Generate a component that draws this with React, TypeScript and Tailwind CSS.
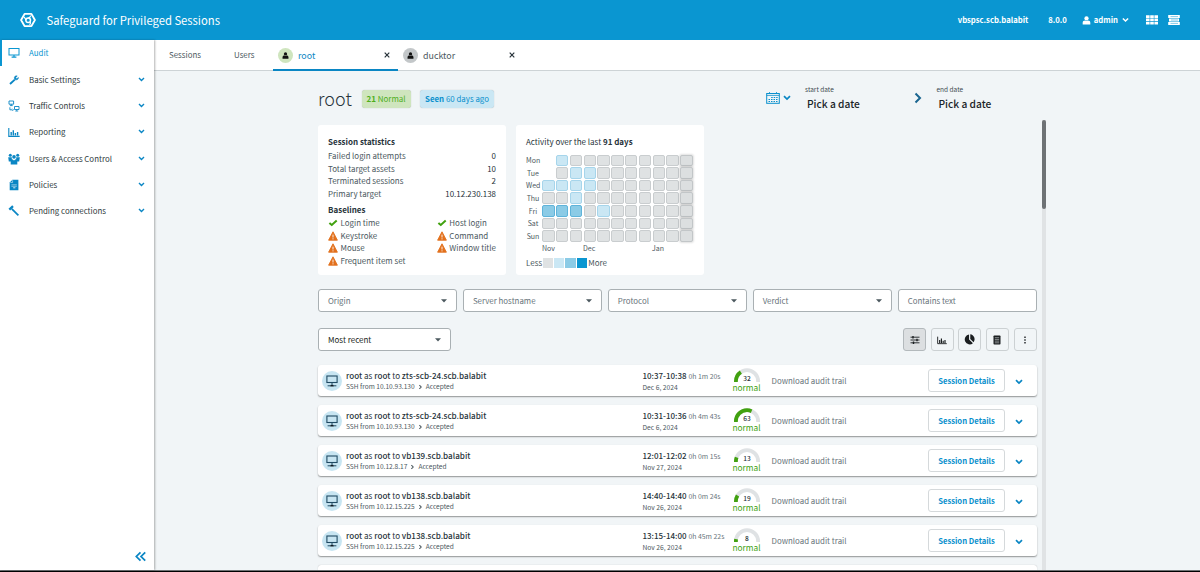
import type { ReactNode } from "react";

type IconProps = { className?: string };

function Chevron({ className = "" }: IconProps) {
  return (
    <svg viewBox="0 0 8 6" className={className} fill="none" stroke="currentColor" strokeWidth="1.7">
      <path d="M1 1.200 4 4.100 7 1.200" />
    </svg>
  );
}

function Monitor({ className = "" }: IconProps) {
  return (
    <svg viewBox="0 0 12 12" className={className} fill="none" stroke="currentColor">
      <rect x=".9" y="1" width="10.200" height="6.500" strokeWidth="1.100" />
      <path d="M6 7.500v3M1.600 10.800h3M7.400 10.800h3" strokeWidth="1" />
      <path d="M4.400 10.700h3.200" strokeWidth="1.600" stroke="#101c24" />
    </svg>
  );
}

function AuditIcon() {
  return (
    <svg viewBox="0 0 12 12" className="size-3" fill="none" stroke="currentColor">
      <rect x="1" y="1.500" width="10" height="6.500" strokeWidth="1" />
      <path d="M6 8v2M3.600 10.200h4.800" strokeWidth="1.200" />
    </svg>
  );
}

function WrenchIcon() {
  return (
    <svg viewBox="0 0 12 12" className="size-3" fill="none" stroke="currentColor">
      <path d="M2 10 6.800 5.600" strokeWidth="1.900" />
      <path d="M9.200 1.900C7 1.400 5.700 3.200 6.600 5.200c1.800 1.500 3.900.3 3.900-1.700L8.700 4.700 7.700 3.700Z" fill="currentColor" strokeWidth=".5" />
    </svg>
  );
}

function TrafficIcon() {
  return (
    <svg viewBox="0 0 12 12" className="size-3" fill="none" stroke="currentColor" strokeWidth=".9">
      <path d="M1 1h4.600v3.200H1ZM3.300 4.200v1.300M1.900 5.600h2.800M6.500 6.500H11v3H6.500ZM8.700 9.500v1.300M7.300 11h2.900M1.900 7.300v2.500h2.300" />
      <path d="m4.400 8.700 1 1.100-1 1.100" />
    </svg>
  );
}

function BarsIcon({ className = "size-3" }: IconProps) {
  return (
    <svg viewBox="0 0 12 12" className={className} fill="none" stroke="currentColor">
      <path d="M.8 2v8.400h10.900" strokeWidth="1.100" />
      <path d="M3.200 6v3.600M5.300 4.200v5.400M7.400 6.900v2.700M9.600 6v3.600" strokeWidth="1.400" />
    </svg>
  );
}

function GroupIcon() {
  return (
    <svg viewBox="0 0 12 12" className="size-3" fill="currentColor">
      <circle cx="2.300" cy="2.300" r="1.500" />
      <circle cx="9.700" cy="2.300" r="1.500" />
      <circle cx="6" cy="3.900" r="1.800" />
      <path d="M.2 4.300h3.600v2.200L2.500 8.500H.8ZM8.200 4.300h3.600l-.6 4.200H9.500L8.200 6.500ZM2.700 6.200h1.600L6 7.600l1.700-1.400h1.600v5.200H2.700Z" />
    </svg>
  );
}

function PolicyIcon() {
  return (
    <svg viewBox="0 0 12 12" className="size-3">
      <path d="M4.400.7h6v10.600H1.700V3.400Z" fill="currentColor" />
      <path d="M4.600 1.200v2.300H2.300M3.400 5.800h5.400M3.400 7.300h5.400" fill="none" stroke="#fff" strokeWidth=".5" />
      <path d="M5.200 8.800h2.200" stroke="#fff" strokeWidth=".8" />
    </svg>
  );
}

function GavelIcon() {
  return (
    <svg viewBox="0 0 12 12" className="size-3" fill="none" stroke="currentColor">
      <path d="M1.300 4.600 5 1.200" strokeWidth="2.300" />
      <path d="m3.800 3.800 6.600 6.600" strokeWidth="1.700" />
    </svg>
  );
}

function Person({ className = "" }: IconProps) {
  return (
    <svg viewBox="0 0 8 8" className={className} fill="currentColor">
      <circle cx="4" cy="2.200" r="1.900" />
      <path d="M.6 7.600V6c0-1.300.8-1.900 2.200-1.900.8.5 1.600.5 2.400 0 1.400 0 2.200.6 2.200 1.900v1.600Z" />
    </svg>
  );
}

function Logo() {
  return (
    <svg viewBox="0 0 16 16" className="ml-[20px] h-4 w-4" fill="none" stroke="#fff">
      <path d="M4.600 1.900h6.800L14.900 8l-3.500 6.100H4.600L1.100 8Z" strokeWidth="1.900" strokeLinejoin="round" />
      <circle cx="8.200" cy="8.300" r="2.300" strokeWidth="1.500" />
      <path d="M5.900 8.300C5.600 6.500 4.900 5.600 3.900 5M8.200 6c1.400-.2 2.200-1 2.500-2.300M10.200 9.500c.6 1.300.2 2.300-.6 3.300" strokeWidth="1.200" />
    </svg>
  );
}

function Warn() {
  return (
    <svg viewBox="0 0 10 10" className="size-[10px]">
      <path d="M5 .8 9.400 9.200H.6Z" fill="#e2701c" stroke="#e2701c" strokeWidth=".9" strokeLinejoin="round" />
      <path d="M5 3.600v2.900M5 7.300v1.100" stroke="#fff" strokeWidth=".9" />
    </svg>
  );
}

function Check() {
  return (
    <svg viewBox="0 0 10 10" className="size-[10px]" fill="none" stroke="#41a10f" strokeWidth="2">
      <path d="M1.400 4.900 3.800 7 8.700 2.500" />
    </svg>
  );
}

const nav: { label: string; icon: ReactNode }[] = [
  { label: "Audit", icon: <AuditIcon /> },
  { label: "Basic Settings", icon: <WrenchIcon /> },
  { label: "Traffic Controls", icon: <TrafficIcon /> },
  { label: "Reporting", icon: <BarsIcon /> },
  { label: "Users & Access Control", icon: <GroupIcon /> },
  { label: "Policies", icon: <PolicyIcon /> },
  { label: "Pending connections", icon: <GavelIcon /> },
];

function Header() {
  return (
    <header className="flex h-10 shrink-0 items-center bg-[#0a96d1] text-white">
      <Logo />
      <h1 className="ml-[10.500px] text-[11.250px] leading-4">Safeguard for Privileged Sessions</h1>
      <div className="ml-auto flex items-center pr-[20px] text-[7.700px] leading-3 font-bold">
        <span>vbspsc.scb.balabit</span>
        <span className="ml-[20px]">8.0.0</span>
        <Person className="ml-[15px] size-[9px]" />
        <span className="ml-[3px]">admin</span>
        <Chevron className="ml-[4px] h-[6px] w-[7px]" />
        <svg viewBox="0 0 12 10" className="ml-[17px] h-[10px] w-3" fill="#fff">
          <path d="M0 .3h3.600v2.700H0ZM4.200.3h3.600v2.700H4.200ZM8.400.3h3.600v2.700H8.400ZM0 3.600h3.600v2.700H0ZM4.200 3.600h3.600v2.700H4.200ZM8.400 3.600h3.600v2.700H8.400ZM0 6.900h3.600v2.700H0ZM4.200 6.900h3.600v2.700H4.200ZM8.400 6.900h3.600v2.700H8.400Z" />
        </svg>
        <svg viewBox="0 0 12 10" className="ml-[10px] h-[10px] w-3" fill="none">
          <path d="M.2 1.500h11.600M1 5h10M.2 8.500h11.600" stroke="#fff" strokeWidth="2.900" />
          <path d="M2.500 1.600h7.500M3 5h7M2.500 8.400h7.500" stroke="#0a96d1" strokeWidth=".5" />
        </svg>
      </div>
    </header>
  );
}

function Sidebar() {
  return (
    <aside className="z-10 flex w-[154px] shrink-0 flex-col bg-white shadow-[1px_0_2px_rgba(0,0,0,0.3)]">
      {nav.map((n, i) => (
        <div
          key={n.label}
          className={
            i === 0
              ? "flex h-[26.25px] items-center border-l-2 border-[#0a96d1] pl-[6px] text-[#0a96d1]"
              : "flex h-[26.25px] items-center pt-px pl-2 text-[#0a86c4]"
          }
        >
          {n.icon}
          <span
            className={
              i === 0
                ? "ml-[9px] text-[7.900px] leading-3"
                : "ml-[9px] text-[7.900px] leading-3 text-[#2f3b40]"
            }
          >
            {n.label}
          </span>
          {i > 0 && <Chevron className="mr-[9px] mb-px ml-auto h-[5px] w-[7px]" />}
        </div>
      ))}
      <svg viewBox="0 0 10 10" className="mt-auto mr-[8px] mb-[8px] ml-auto size-[11px]" fill="none" stroke="#0a86c4" strokeWidth="1.600">
        <path d="M5 1.200 1.200 5 5 8.800M9.300 1.200 5.500 5l3.800 3.800" />
      </svg>
    </aside>
  );
}

function Close() {
  return (
    <svg viewBox="0 0 6 6" className="ml-auto size-[6px]" stroke="#27333a" strokeWidth="1.200">
      <path d="m.7.700 4.600 4.600M5.300.700.7 5.300" />
    </svg>
  );
}

function Tabs() {
  return (
    <div className="flex h-[31px] shrink-0 border-b border-[#cdd3d6] bg-white text-[7.900px] text-[#4b585e]">
      <div className="flex w-[65px] items-center pl-[15px]">Sessions</div>
      <div className="flex w-[54px] items-center pl-[15px]">Users</div>
      <div className="-mb-px flex w-[125px] items-center border-b-2 border-[#0a86c4] pt-px pr-[8px] pl-[5px]">
        <span className="flex size-[15px] items-center justify-center rounded-full bg-[#cfe5be] text-[#111]">
          <Person className="size-[7px]" />
        </span>
        <span className="mt-px ml-[5px] text-[8.900px] text-[#0a86c4]">root</span>
        <Close />
      </div>
      <div className="flex w-[125px] items-center pr-[8px] pl-[5px]">
        <span className="flex size-[15px] items-center justify-center rounded-full bg-[#c3c7c9] text-[#111]">
          <Person className="size-[7px]" />
        </span>
        <span className="mt-px ml-[5px] text-[8.900px]">ducktor</span>
        <Close />
      </div>
    </div>
  );
}

function DateField({ label }: { label: string }) {
  return (
    <div className="mb-[2px] w-[57px]">
      <div className="text-[6.500px] leading-[10px] text-[#3f4b50]">{label}</div>
      <div className="mt-[3px] ml-[2px] text-[10.200px] leading-[14px] font-medium whitespace-nowrap text-[#1a2428]">Pick a date</div>
    </div>
  );
}

function TitleRow() {
  return (
    <div className="flex h-[54px] items-center">
      <h2 className="-mt-px w-[35px] text-[18px] leading-5 font-light text-[#27333a]">root</h2>
      <span className="mt-[2px] ml-[8.500px] flex h-[18px] w-[49px] items-center justify-center rounded-[3px] bg-[#cfe5be] text-[8px] whitespace-pre text-[#4eae1b] shadow-[0_0_1px_rgba(0,0,0,0.3)]">
        <b>21</b> Normal
      </span>
      <span className="mt-[2px] ml-[9.500px] flex h-[18px] w-[74px] items-center justify-center rounded-[3px] bg-[#cae7f4] text-[7.900px] whitespace-pre text-[#0a90cd] shadow-[0_0_1px_rgba(0,0,0,0.3)]">
        <b>Seen</b> 60 days ago
      </span>
      <svg viewBox="0 0 14 12" className="ml-auto h-3 w-[14px]" fill="none" stroke="#0a90cd">
        <rect x=".7" y="1.500" width="12.600" height="9.800" strokeWidth="1" />
        <path d="M.7 3.400h12.600M3.500 0v2M10.500 0v2" strokeWidth=".8" />
        <path d="M5.200 5.500h6.500M2.500 7.500h9.200M2.500 9.500h9" strokeWidth="1.200" strokeDasharray="1.500 1" />
      </svg>
      <Chevron className="mr-[14px] ml-[3.500px] h-[6px] w-[8px] text-[#0a86c4]" />
      <DateField label="start date" />
      <svg viewBox="0 0 8 12" className="mr-[14.500px] ml-[52px] h-3 w-2" fill="none" stroke="#1a6590" strokeWidth="2">
        <path d="m1.500 1.500 4.500 4.500-4.500 4.500" />
      </svg>
      <DateField label="end date" />
      <div className="w-[43px]" />
    </div>
  );
}

const stats = [
  ["Failed login attempts", "0"],
  ["Total target assets", "10"],
  ["Terminated sessions", "2"],
  ["Primary target", "10.12.230.138"],
];
const baselines: [string, boolean][][] = [
  [["Login time", true], ["Keystroke", false], ["Mouse", false], ["Frequent item set", false]],
  [["Host login", true], ["Command", false], ["Window title", false]],
];

function StatsCard() {
  return (
    <section className="h-[150px] w-[188px] rounded-[3px] bg-white px-[10px] pt-[11px] text-[7.950px] leading-[12.500px] text-[#4b585e]">
      <h3 className="mb-[1.500px] text-[8px] font-bold text-[#27333a]">Session statistics</h3>
      {stats.map(([k, v]) => (
        <div key={k} className="flex justify-between">
          <span>{k}</span>
          <span className="text-[#27333a]">{v}</span>
        </div>
      ))}
      <h3 className="mt-[3.700px] mb-px text-[8px] font-bold text-[#27333a]">Baselines</h3>
      <div className="flex">
        {baselines.map((col, i) => (
          <div key={i} className={i === 0 ? "w-[109.500px]" : ""}>
            {col.map(([t, ok]) => (
              <div key={t} className="flex items-center gap-[2.500px] whitespace-nowrap">
                {ok ? <Check /> : <Warn />}
                <span>{t}</span>
              </div>
            ))}
          </div>
        ))}
      </div>
    </section>
  );
}

const heat: [string, string][] = [
  ["Mon", " 1000000003"],
  ["Tue", " 0110000003"],
  ["Wed", "11110000003"],
  ["Thu", "00100000003"],
  ["Fri", "22201000003"],
  ["Sat", "00000000003"],
  ["Sun", "00000000003"],
];
const cellClass: Record<string, string> = {
  " ": "h-[11.500px] w-[12.500px]",
  "0": "h-[11.500px] w-[12.500px] rounded-[2px] border border-[#c9cdcf] bg-[#dfe2e3]",
  "1": "h-[11.500px] w-[12.500px] rounded-[2px] border border-[#a6d5eb] bg-[#cae7f4]",
  "2": "h-[11.500px] w-[12.500px] rounded-[2px] border border-[#5fb4da] bg-[#8bcbe6]",
  "3": "h-[11.500px] w-[12.500px] rounded-[2px] border border-[#c2c6c8] bg-[#dcdfe0] shadow-[0_0_2px_1px_rgba(0,0,0,0.12)]",
};

function ActivityCard() {
  return (
    <section className="h-[150px] w-[188px] rounded-[3px] bg-white px-[10px] pt-[10px] text-[8px] text-[#27333a]">
      <h3 className="leading-[13px] whitespace-pre">
        Activity over the last <b>91 days</b>
      </h3>
      <div className="mt-[6.300px] text-[7px]">
        {heat.map(([d, cells]) => (
          <div key={d} className="flex h-[12.550px] items-center">
            <span className="w-[14px] text-center text-[#4b585e]">{d}</span>
            <div className="ml-[2.200px] flex gap-[1.300px]">
              {cells.split("").map((c, i) => (
                <div key={i} className={cellClass[c]} />
              ))}
            </div>
          </div>
        ))}
      </div>
      <div className="mt-[1.200px] flex pl-[16px] text-[7px] leading-[10px] text-[#4b585e]">
        <span className="w-[41px]">Nov</span>
        <span className="w-[69px]">Dec</span>
        <span>Jan</span>
      </div>
      <div className="mt-[4px] flex items-center leading-3 text-[#4b585e]">
        <span className="w-[17px]">Less</span>
        <div className="flex gap-px">
          <div className="size-[10.200px] bg-[#dfe2e3]" />
          <div className="size-[10.200px] bg-[#cae7f4]" />
          <div className="size-[10.200px] bg-[#8bcbe6]" />
          <div className="size-[10.200px] bg-[#0a96d1]" />
        </div>
        <span className="ml-[1.500px]">More</span>
      </div>
    </section>
  );
}

function Caret() {
  return (
    <svg viewBox="0 0 6 4" className="ml-auto h-[4px] w-[6px]" fill="#4b585e">
      <path d="M0 .3h6L3 3.500Z" />
    </svg>
  );
}

function Filters() {
  return (
    <div className="mt-[14px] flex gap-[6px] text-[7.900px] text-[#67737a]">
      {["Origin", "Server hostname", "Protocol", "Verdict", "Contains text"].map((t, i) => (
        <div key={t} className="flex h-[23px] flex-1 items-center rounded-[3px] border border-[#a9b0b3] bg-white pt-px pr-[9px] pl-[9px]">
          {t}
          {i < 4 && <Caret />}
        </div>
      ))}
    </div>
  );
}

function ToolButton({ active, children }: { active?: boolean; children: ReactNode }) {
  return (
    <button
      className={
        active
          ? "flex h-[23px] w-[23px] items-center justify-center rounded-[3px] border border-[#b3b9bc] bg-[#dcdfe1]"
          : "flex h-[23px] w-[23px] items-center justify-center rounded-[3px] border border-[#ccd1d3]"
      }
    >
      {children}
    </button>
  );
}

function Toolbar() {
  return (
    <div className="mt-[16px] flex items-center text-[#1b1f21]">
      <div className="mr-auto flex h-[23px] w-[133px] items-center rounded-[3px] border border-[#a9b0b3] bg-white px-[9px] pt-px text-[8px]">
        Most recent
        <Caret />
      </div>
      <div className="flex gap-[4.600px]">
        <ToolButton active>
          <svg viewBox="0 0 10 8" className="h-2 w-[10px]" stroke="currentColor" fill="none">
            <path d="M.5 1.200h9M.5 4h9M.5 6.800h9" strokeWidth=".9" />
            <path d="M3 0v2.400M7 2.800v2.400M3.500 5.600V8" strokeWidth="1.400" />
          </svg>
        </ToolButton>
        <ToolButton>
          <BarsIcon className="size-[10px]" />
        </ToolButton>
        <ToolButton>
          <svg viewBox="0 0 10 10" className="size-[11px]" fill="currentColor">
            <path d="M4.600.500a4.500 4.500 0 1 0 3.500 7.900L4.600 5ZM5.700.200a4.600 4.600 0 0 1 3 7.300L5.700 4.500Z" />
          </svg>
        </ToolButton>
        <ToolButton>
          <svg viewBox="0 0 8 10" className="h-[10px] w-2">
            <rect x=".5" y=".4" width="7" height="9.200" rx=".8" fill="currentColor" />
            <path d="M1.800 2.700h4.400M1.800 4.400h4.400M1.800 6.100h4.400M1.800 7.800h4.400" stroke="#b8bdbf" strokeWidth=".7" />
          </svg>
        </ToolButton>
        <ToolButton>
          <svg viewBox="0 0 2 8" className="h-2 w-[2px]" fill="currentColor">
            <path d="M.3.500h1.400v1.400H.3ZM.3 3.300h1.400v1.400H.3ZM.3 6.100h1.400v1.400H.3Z" />
          </svg>
        </ToolButton>
      </div>
    </div>
  );
}

function Gauge({ value }: { value: number }) {
  return (
    <div className="mb-px -ml-[0.500px] flex w-[28px] flex-col items-center">
      <svg viewBox="0 0 28 15" className="h-[15px] w-[28px]" fill="none" strokeWidth="3.800">
        <path d="M2.900 14V13.300A11.100 11.100 0 0 1 25.100 13.300V14" stroke="#dfe2e4" pathLength="100" />
        <path
          d="M2.900 14V13.300A11.100 11.100 0 0 1 25.100 13.300V14"
          stroke="#41a10f"
          pathLength="100"
          strokeDasharray={`${value} 200`}
        />
        <text x="14" y="13.400" textAnchor="middle" fontSize="6.600" fontWeight="500" fill="#27333a" stroke="none">
          {value}
        </text>
      </svg>
      <span className="text-[8.300px] leading-[9px] text-[#41a10f]">normal</span>
    </div>
  );
}

const sessions = [
  { host: "zts-scb-24.scb.balabit", ip: "10.10.93.130", time: "10:37-10:38", dur: "0h 1m 20s", date: "Dec 6, 2024", score: 32 },
  { host: "zts-scb-24.scb.balabit", ip: "10.10.93.130", time: "10:31-10:36", dur: "0h 4m 43s", date: "Dec 6, 2024", score: 63 },
  { host: "vb139.scb.balabit", ip: "10.12.8.17", time: "12:01-12:02", dur: "0h 0m 15s", date: "Nov 27, 2024", score: 13 },
  { host: "vb138.scb.balabit", ip: "10.12.15.225", time: "14:40-14:40", dur: "0h 0m 24s", date: "Nov 26, 2024", score: 19 },
  { host: "vb138.scb.balabit", ip: "10.12.15.225", time: "13:15-14:00", dur: "0h 45m 22s", date: "Nov 26, 2024", score: 8 },
];

function SessionRow({ s }: { s: (typeof sessions)[number] }) {
  return (
    <div className="flex h-[31px] shrink-0 items-center rounded-[3px] bg-white text-[7.900px] text-[#27333a] shadow-[0_1px_1.500px_rgba(0,0,0,0.4)]">
      <span className="ml-[4px] flex size-5 items-center justify-center rounded-full bg-[#c7e5f2] text-[#1f4a63]">
        <Monitor className="size-3" />
      </span>
      <div className="mt-px ml-[4px] w-[296.500px]">
        <div className="text-[8.100px] leading-[11px] whitespace-pre">
          <b className="font-medium">root</b> as <b className="font-medium">root</b> to <b className="font-medium">{s.host}</b>
        </div>
        <div className="flex items-center text-[6.600px] leading-[11px] text-[#4b585e]">
          SSH from {s.ip}
          <Chevron className="mx-[3px] h-[4px] w-[5px] -rotate-90" />
          Accepted
        </div>
      </div>
      <div className="mt-px w-[90.500px]">
        <div className="leading-[11px] whitespace-pre">
          <b className="text-[8px] font-medium">{s.time}</b> <span className="text-[6.900px] text-[#67737a]">{s.dur}</span>
        </div>
        <div className="text-[6.700px] leading-[11px] text-[#4b585e]">{s.date}</div>
      </div>
      <Gauge value={s.score} />
      <span className="mt-px ml-[11px] text-[#67737a]">Download audit trail</span>
      <button className="ml-auto h-[23px] w-[77px] rounded-[3px] border border-[#d5d9db] pt-px text-[7.700px] font-bold text-[#0a90cd]">
        Session Details
      </button>
      <Chevron className="mt-[2px] mr-[14px] ml-[9.500px] h-[6px] w-[8px] text-[#0a86c4]" />
    </div>
  );
}

export default function App() {
  return (
    <div className="flex h-[572px] w-[1200px] flex-col overflow-hidden bg-[#f1f5f7] font-['Noto_Sans_CJK_SC','Noto_Sans',sans-serif]">
      <Header />
      <div className="flex h-[530px] shrink-0">
        <Sidebar />
        <div className="flex min-w-0 flex-1 flex-col">
          <Tabs />
          <main className="flex min-h-0 flex-1 overflow-hidden">
            <div className="ml-[164px] w-[718.500px] shrink-0">
              <TitleRow />
              <div className="flex gap-[10px]">
                <StatsCard />
                <ActivityCard />
              </div>
              <Filters />
              <Toolbar />
              <div className="mt-[14px] flex flex-col gap-[9px]">
                {sessions.map((s, i) => (
                  <SessionRow key={i} s={s} />
                ))}
                <div className="h-[31px] shrink-0 rounded-[3px] bg-white shadow-[0_0_1px_rgba(0,0,0,0.3)]" />
              </div>
            </div>
            <div className="mt-[49px] ml-[5px] w-[4.500px] bg-[#e0e3e5]">
              <div className="h-[89px] rounded-full bg-[#6e7275]" />
            </div>
          </main>
        </div>
      </div>
      <footer className="h-[2px] shrink-0 border-t border-[#6e7274] bg-black" />
    </div>
  );
}
